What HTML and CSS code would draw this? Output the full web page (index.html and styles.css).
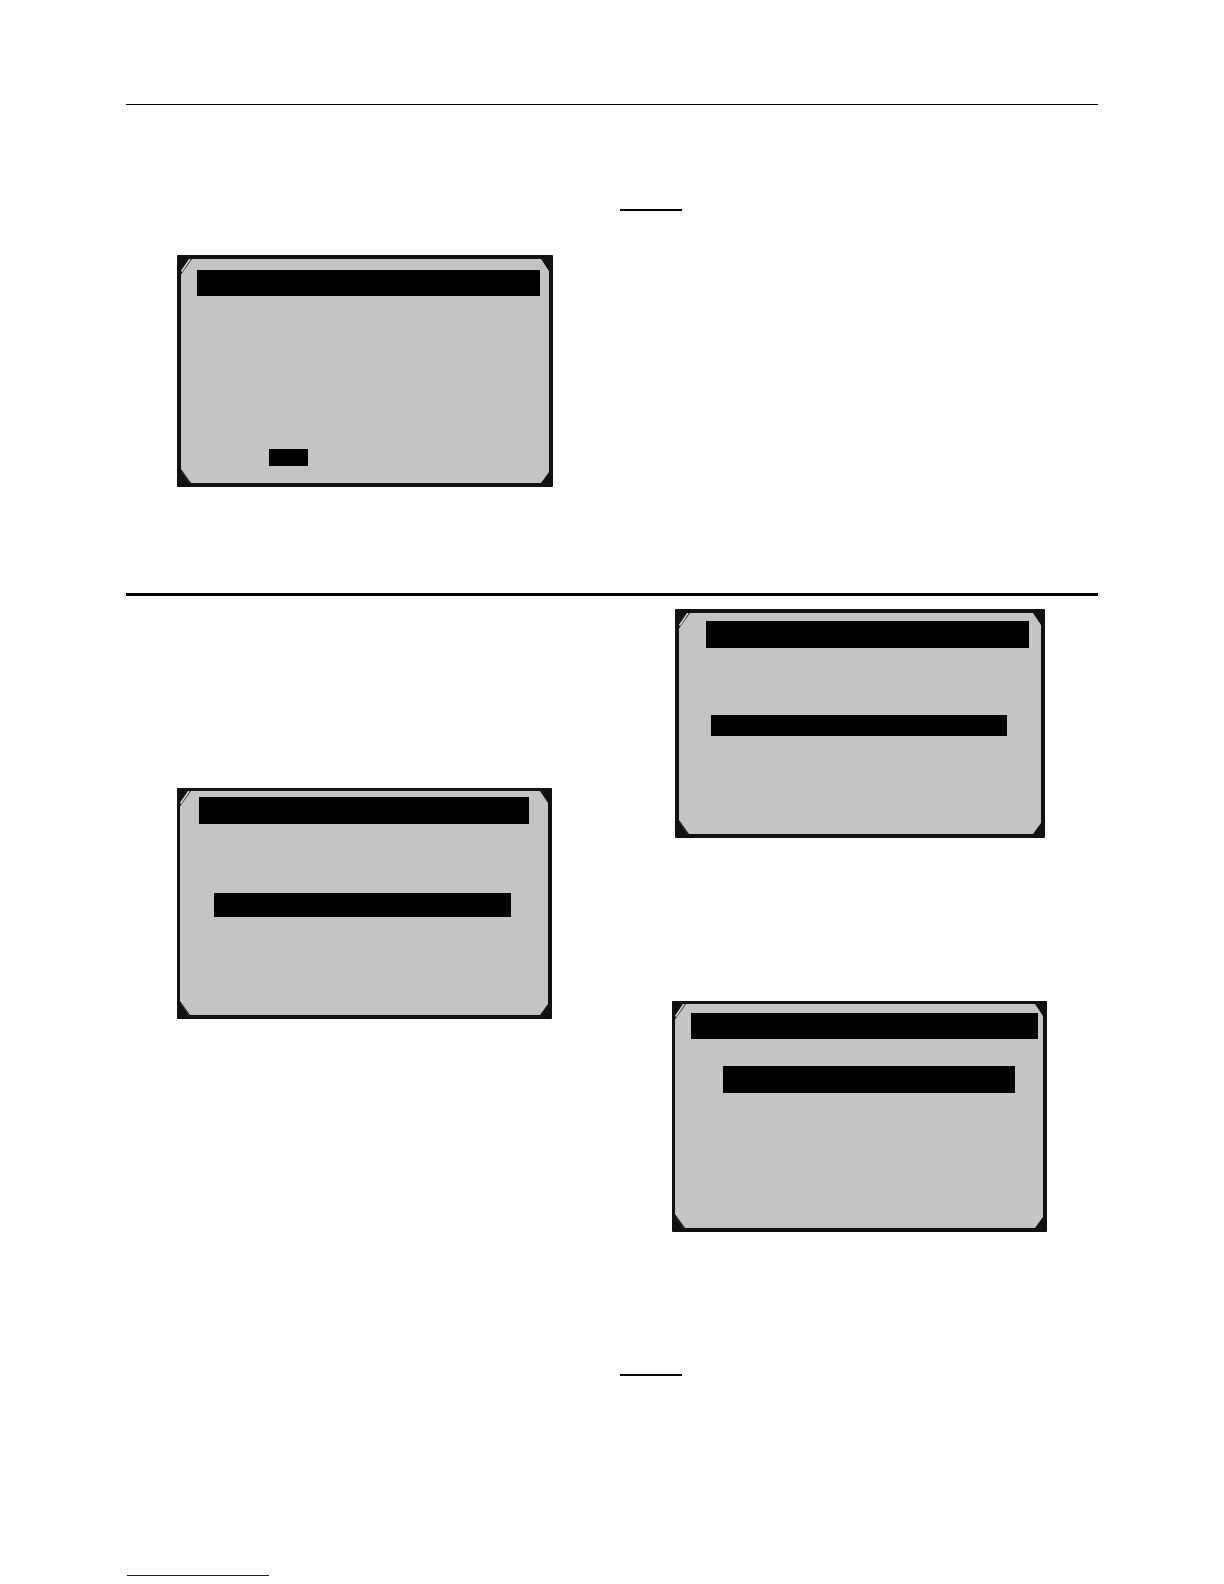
FILE: index.html
```
<!DOCTYPE html>
<html lang="en">
<head>
<meta charset="utf-8">
<title>Display screens</title>
<link rel="stylesheet" href="styles.css">
</head>
<body>
<svg width="0" height="0" class="defs" aria-hidden="true">
  <symbol id="corner-tl" viewBox="0 0 12 16"><path d="M0 0H11L0 15.500Z" fill="#111"/><path d="M9 0L.5 12.500" stroke="#d4d4d4" stroke-width="1.700"/></symbol>
  <symbol id="corner-tr" viewBox="0 0 12 16"><path d="M12 0H4L12 12Z" fill="#111"/></symbol>
  <symbol id="corner-bl" viewBox="0 0 12 16"><path d="M0 16V2L10 16Z" fill="#111"/><path d="M1 5L8.500 16" stroke="#444" stroke-width=".6"/></symbol>
  <symbol id="corner-br" viewBox="0 0 12 16"><path d="M12 16V5L4 16Z" fill="#111"/></symbol>
</svg>
<main class="page">
  <hr class="rule rule-thin">
  <section class="columns columns-first">
    <div class="column">
      <div class="screen screen-confirm">
        <svg class="corner tl"><use href="#corner-tl"/></svg><svg class="corner tr"><use href="#corner-tr"/></svg><svg class="corner bl"><use href="#corner-bl"/></svg><svg class="corner br"><use href="#corner-br"/></svg>
        <div class="title-bar"></div>
        <div class="selection"></div>
      </div>
    </div>
    <div class="column">
      <div class="note-line"></div>
    </div>
  </section>
  <hr class="rule rule-thick">
  <section class="columns">
    <div class="column">
      <div class="screen screen-menu">
        <svg class="corner tl"><use href="#corner-tl"/></svg><svg class="corner tr"><use href="#corner-tr"/></svg><svg class="corner bl"><use href="#corner-bl"/></svg><svg class="corner br"><use href="#corner-br"/></svg>
        <div class="title-bar"></div>
        <div class="selection"></div>
      </div>
    </div>
    <div class="column">
      <div class="screen screen-submenu">
        <svg class="corner tl"><use href="#corner-tl"/></svg><svg class="corner tr"><use href="#corner-tr"/></svg><svg class="corner bl"><use href="#corner-bl"/></svg><svg class="corner br"><use href="#corner-br"/></svg>
        <div class="title-bar"></div>
        <div class="selection"></div>
      </div>
      <div class="screen screen-list">
        <svg class="corner tl"><use href="#corner-tl"/></svg><svg class="corner tr"><use href="#corner-tr"/></svg><svg class="corner bl"><use href="#corner-bl"/></svg><svg class="corner br"><use href="#corner-br"/></svg>
        <div class="title-bar"></div>
        <div class="selection"></div>
      </div>
      <div class="note-line"></div>
    </div>
  </section>
  <footer class="footer"><div class="footer-line"></div></footer>
</main>
</body>
</html>
```
FILE: styles.css
```
* { box-sizing: border-box; }

body {
  margin: 0;
  background: #fff;
  font-family: "Liberation Sans", Arial, sans-serif;
}

.defs { position: absolute; }

.page { padding: 104px 126px 8px; }

.rule { margin: 0; border: 0; background: #000; }
.rule-thin { height: 1px; }
.rule-thick { height: 3px; }

.columns {
  display: grid;
  grid-template-columns: 1fr 1fr;
  gap: 16px;
}
.columns-first { padding-bottom: 106px; }

.column { display: flex; flex-direction: column; }

.note-line {
  width: 62px;
  height: 2px;
  margin-top: 142px;
  background: #000;
}
.columns-first .note-line { margin-top: 104px; }

/* LCD panel with bevelled corners */
.screen {
  position: relative;
  display: flex;
  flex-direction: column;
  width: 375px;
  max-width: 100%;
  border: 4px solid #111;
  border-radius: 1px;
  background: #c4c4c4;
}

.corner { position: absolute; width: 12px; height: 16px; }
.tl { top: 0; left: 0; }
.tr { top: 0; right: 0; }
.bl { bottom: 0; left: 0; }
.br { bottom: 0; right: 0; }

.title-bar { height: 26px; background: #000; }
.selection { height: 24px; background: #000; }

.screen-confirm { width: 376px; margin: 150px 0 0 51px; }
.screen-confirm .title-bar { margin: 11px 9px 0 16px; }
.screen-confirm .selection { width: 39px; height: 17px; margin: 153px 0 17px 88px; }

.screen-menu { margin: 192px 0 0 51px; border-width: 3px 4px 4px 3px; }
.screen-menu .title-bar { height: 27px; margin: 6px 19px 0; }
.screen-menu .selection { margin: 69px 37px 98px 34px; }

.screen-submenu { width: 370px; margin: 13px 0 0 55px; }
.screen-submenu .title-bar { height: 27px; margin: 8px 12px 0 27px; }
.screen-submenu .selection { height: 21px; margin: 67px 34px 98px 32px; }

.screen-list { margin: 163px 0 0 52px; border-width: 3px 4px 4px 3px; }
.screen-list .title-bar { margin: 9px 5px 0 16px; }
.screen-list .selection { height: 27px; margin: 27px 28px 135px 48px; }

.footer { padding: 199px 1px 0; }
.footer-line { width: 142px; height: 1px; background: #10108a; }
```
